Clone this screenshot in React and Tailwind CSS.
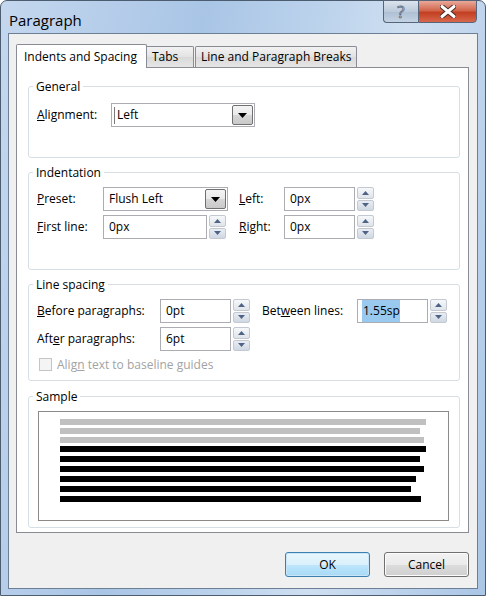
import React from 'react';

const Spinner = () => (
    <div className="flex flex-col w-[17px] h-[24px] gap-[1px]">
        <div className="flex-1 flex items-center justify-center border border-[#c3c8d1] rounded-[2px] bg-[linear-gradient(#f6f8fa,#dfe4ea)]">
            <svg width="7" height="4" viewBox="0 0 7 4"><path d="M0 4 L3.5 0 L7 4 Z" fill="#4e6386" /></svg>
        </div>
        <div className="flex-1 flex items-center justify-center border border-[#c3c8d1] rounded-[2px] bg-[linear-gradient(#e9edf2,#cfd8e3)]">
            <svg width="7" height="4" viewBox="0 0 7 4"><path d="M0 0 L7 0 L3.5 4 Z" fill="#4e6386" /></svg>
        </div>
    </div>
);

const TextField = ({ width, children }) => (
    <div className={`${width} h-[24px] border border-[#abadb3] bg-white pl-[5px] flex items-center`}>
        {children}
    </div>
);

const NumberField = ({ width, children }) => (
    <div className="flex items-center gap-[2px]">
        <TextField width={width}>{children}</TextField>
        <Spinner />
    </div>
);

const Dropdown = ({ width, value, caret }) => (
    <div className={`${width} h-[24px] border border-[#abadb3] bg-white flex items-center pl-[2px] pr-[1px]`}>
        {caret && <div className="w-px h-[17px] bg-[#7a7a7a] mr-[2px]" />}
        <span className={caret ? '' : 'pl-[3px]'}>{value}</span>
        <div className="ml-auto w-[21px] h-[20px] border border-[#707070] rounded-[2px] bg-[linear-gradient(#f4f4f4_0%,#e9e9e9_50%,#d6d6d6_51%,#c9c9c9_100%)] flex items-center justify-center">
            <svg width="9" height="5" viewBox="0 0 9 5"><path d="M0 0 L9 0 L4.5 5 Z" fill="#000" /></svg>
        </div>
    </div>
);

const Group = ({ title, className, children }) => (
    <div className={`relative border border-[#d5dfe5] rounded-[3px] ${className}`}>
        <span className="absolute left-[4px] -top-[9px] bg-white px-[3px] leading-[18px]">{title}</span>
        {children}
    </div>
);

const Button = ({ children, primary }) => (
    <div
        className={`w-[85px] h-[25px] rounded-[3px] flex items-center justify-center border ${
            primary
                ? 'border-[#3c7fb1] bg-[linear-gradient(#eaf6fd_0%,#d9f0fc_50%,#bee6fd_51%,#a7d9f5_100%)] shadow-[inset_0_0_0_1px_#c8e6f7]'
                : 'border-[#707070] bg-[linear-gradient(#f2f2f2_0%,#ebebeb_50%,#dddddd_51%,#cfcfcf_100%)] shadow-[inset_0_0_0_1px_#fcfcfc]'
        }`}
    >
        {children}
    </div>
);

const sampleGray = [366, 360, 364];
const sampleBlack = [366, 360, 364, 356, 351, 361];

export default function App() {
    return (
        <div className="w-[486px] h-[596px] font-['Open_Sans',sans-serif] text-[12px] text-black leading-none">
            <div className="w-full h-full rounded-t-[7px] border border-[#4d5d70] bg-[linear-gradient(100deg,#c4d7ee_0%,#a9c5e6_35%,#bcd3ec_55%,#cfdff1_70%,#aac6e6_100%)] flex flex-col">
                {/* Title bar */}
                <div className="h-[32px] flex items-start">
                    <span className="pl-[8px] pt-[10px] text-[15px] leading-[18px] text-black">Paragraph</span>
                    <div className="ml-auto mr-[8px] -mt-px flex">
                        <div className="w-[35px] h-[23px] border border-[#56657a] border-r-0 rounded-bl-[4px] bg-[linear-gradient(#dbe4ee,#bccadb_50%,#aebfd4_51%,#c4d3e4)] flex items-center justify-center">
                            <span className="text-[17px] leading-none text-[#eef2f7] [-webkit-text-stroke:0.8px_#5a6678]">?</span>
                        </div>
                        <div className="w-[59px] h-[23px] border border-[#56657a] rounded-br-[4px] bg-[linear-gradient(#e9a999,#d2664d_45%,#c33f22_55%,#d7684c)] flex items-center justify-center">
                            <svg width="16" height="13" viewBox="0 0 16 13">
                                <path d="M2 1.5 L14 11.5 M14 1.5 L2 11.5" stroke="#4a2a22" strokeWidth="5" strokeLinecap="round" />
                                <path d="M2 1.5 L14 11.5 M14 1.5 L2 11.5" stroke="#ffffff" strokeWidth="3" strokeLinecap="round" />
                            </svg>
                        </div>
                    </div>
                </div>

                {/* Client area */}
                <div className="ml-[7px] w-[470px] h-[556px] border border-[#6d7f95] bg-[#f0f0f0] pt-[10px] pl-[7px] flex flex-col">
                    {/* Tabs */}
                    <div className="flex items-end h-[23px]">
                        <div className="relative z-10 -mb-px h-[24px] w-[131px] bg-white border border-b-0 border-[#898c95] rounded-t-[2px] flex items-center pl-[7px]">
                            Indents and Spacing
                        </div>
                        <div className="h-[21px] w-[47px] border border-b-0 border-l-0 border-[#898c95] rounded-tr-[2px] bg-[linear-gradient(#f2f2f2,#e3e3e3_50%,#d9d9d9_51%,#e6e6e6)] flex items-center pl-[5px]">
                            Tabs
                        </div>
                        <div className="h-[21px] w-[162px] ml-px border border-b-0 border-[#898c95] rounded-t-[2px] bg-[linear-gradient(#f2f2f2,#e3e3e3_50%,#d9d9d9_51%,#e6e6e6)] flex items-center pl-[5px]">
                            Line and Paragraph Breaks
                        </div>
                    </div>

                    {/* Panel */}
                    <div className="w-[453px] h-[466px] border border-[#898c95] bg-white pl-[11px] pr-[8px] pt-[18px]">
                        <Group title="General" className="h-[72px] pt-[16px] pl-[8px]">
                            <div className="flex items-center">
                                <span className="w-[74px]"><u>A</u>lignment:</span>
                                <Dropdown width="w-[144px]" value="Left" caret />
                            </div>
                        </Group>

                        <Group title="Indentation" className="mt-[14px] h-[98px] pt-[14px] pl-[8px]">
                            <div className="grid grid-cols-[66px_136px_45px_auto] gap-y-[4px] items-center">
                                <span><u>P</u>reset:</span>
                                <Dropdown width="w-[125px]" value="Flush Left" />
                                <span><u>L</u>eft:</span>
                                <NumberField width="w-[71px]">0px</NumberField>

                                <span><u>F</u>irst line:</span>
                                <NumberField width="w-[104px]">0px</NumberField>
                                <span><u>R</u>ight:</span>
                                <NumberField width="w-[71px]">0px</NumberField>
                            </div>
                        </Group>

                        <Group title="Line spacing" className="mt-[14px] h-[97px] pt-[14px] pl-[8px]">
                            <div className="grid grid-cols-[123px_102px_95px_auto] gap-y-[4px] items-center">
                                <span><u>B</u>efore paragraphs:</span>
                                <NumberField width="w-[71px]">0pt</NumberField>
                                <span>Bet<u>w</u>een lines:</span>
                                <NumberField width="w-[71px]">
                                    <span className="bg-[#99c9ef] py-[5px] pl-[1px] pr-0 -ml-[1px]">1.55sp</span>
                                </NumberField>

                                <span>Aft<u>e</u>r paragraphs:</span>
                                <NumberField width="w-[71px]">6pt</NumberField>
                                <span />
                                <span />
                            </div>
                            <div className="mt-[7px] flex items-center text-[#a3a3a3]">
                                <div className="ml-[2px] w-[13px] h-[13px] border border-[#c5c5c5] bg-[#f4f4f4]" />
                                <span className="ml-[5px]">Alig<u>n</u> text to baseline guides</span>
                            </div>
                        </Group>

                        <Group title="Sample" className="mt-[15px] h-[132px] pt-[14px] pl-[9px]">
                            <div className="w-[411px] h-[110px] border border-[#8a8a8a] bg-white pt-[7px] pl-[21px] flex flex-col">
                                {sampleGray.map((w, i) => (
                                    <div key={`g${i}`} className="h-[6px] mb-[3px] bg-[#c0c0c0]" style={{ width: w }} />
                                ))}
                                {sampleBlack.map((w, i) => (
                                    <div key={`b${i}`} className="h-[6px] mb-[4px] bg-black" style={{ width: w }} />
                                ))}
                            </div>
                        </Group>
                    </div>

                    {/* Buttons */}
                    <div className="mt-[19px] flex justify-end gap-[14px] pr-[8px]">
                        <Button primary>OK</Button>
                        <Button>Cancel</Button>
                    </div>
                </div>
            </div>
        </div>
    );
}
